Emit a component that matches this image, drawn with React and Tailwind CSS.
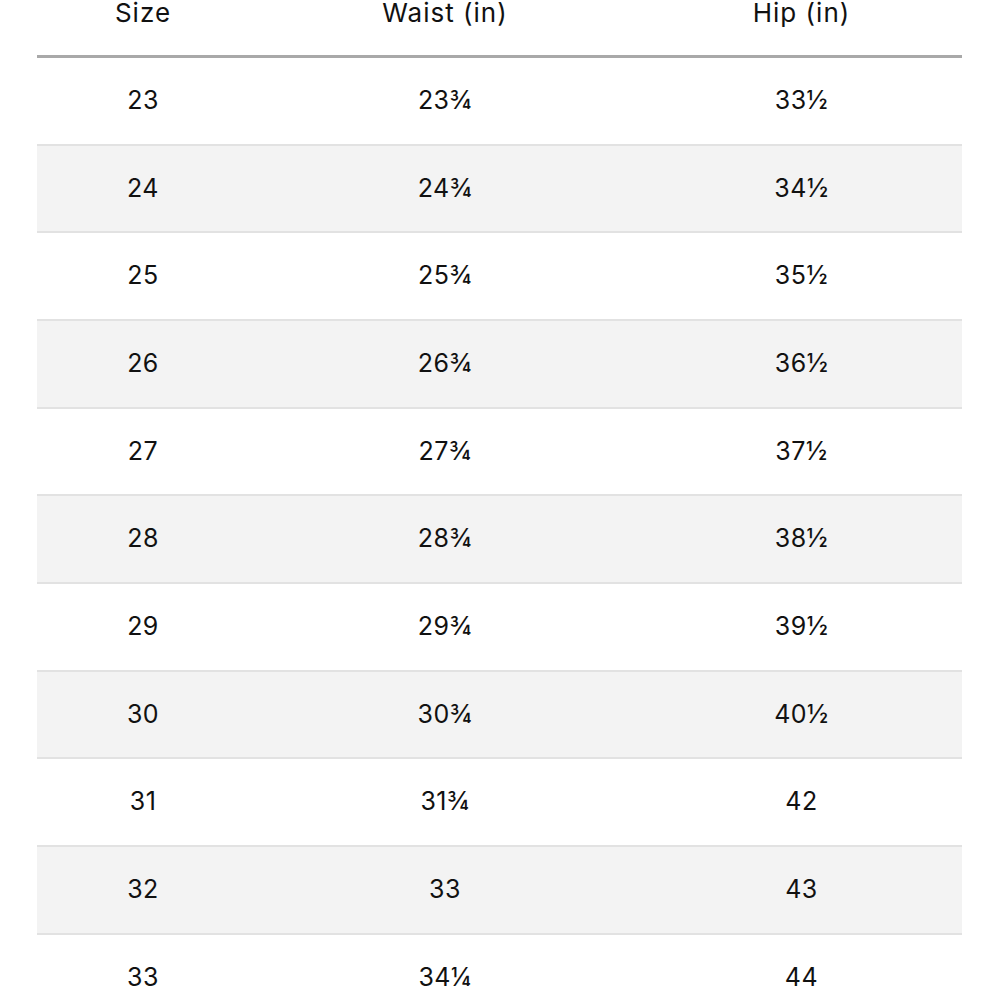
const rows = [
  ["23", "23¾", "33½"],
  ["24", "24¾", "34½"],
  ["25", "25¾", "35½"],
  ["26", "26¾", "36½"],
  ["27", "27¾", "37½"],
  ["28", "28¾", "38½"],
  ["29", "29¾", "39½"],
  ["30", "30¾", "40½"],
  ["31", "31¾", "42"],
  ["32", "33", "43"],
  ["33", "34¼", "44"],
  ["34", "35¼", "45"],
];

export default function App() {
  return (
    <div className="h-[1000px] w-[1000px] overflow-hidden bg-white">
      <div className="ml-[37px] mt-[-30px] w-[925px] text-[#111] text-[25px] tracking-[0.5px] font-['Inter',sans-serif]">
        <div className="grid grid-cols-[212px_392px_321px] h-[88px] border-b-[3px] border-[#a9a9a9] items-center text-center text-[26px] tracking-[1px]">
          <div>Size</div>
          <div>Waist (in)</div>
          <div>Hip (in)</div>
        </div>
        {rows.map((r, i) => (
          <div
            key={i}
            className={
              "grid grid-cols-[212px_392px_321px] h-[87.67px] border-b-2 border-[#e2e2e2] items-center text-center " +
              (i % 2 === 1 ? "bg-[#f3f3f3]" : "bg-white")
            }
          >
            <div>{r[0]}</div>
            <div>{r[1]}</div>
            <div>{r[2]}</div>
          </div>
        ))}
      </div>
    </div>
  );
}
